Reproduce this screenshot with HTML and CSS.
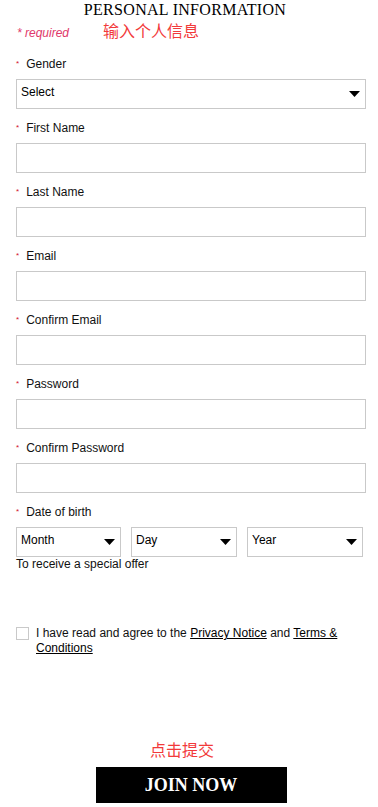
FILE: index.html
```html
<!DOCTYPE html>
<html lang="en">
<head>
<meta charset="utf-8">
<title>Personal Information</title>
<link rel="stylesheet" href="styles.css">
</head>
<body>
<form class="page">
  <h1 class="title">PERSONAL INFORMATION</h1>
  <div class="req-row">
    <span class="req-note">* required</span>
    <span class="cn-note">输入个人信息</span>
  </div>

  <div class="field">
    <label class="label"><span class="star">*</span>Gender</label>
    <div class="select">
      <span>Select</span>
      <svg class="caret" width="11" height="6" viewBox="0 0 11 6"><path d="M0 0H11L5.5 6Z" fill="#000"/></svg>
    </div>
  </div>
  <div class="field">
    <label class="label"><span class="star">*</span>First Name</label>
    <input class="input" type="text">
  </div>
  <div class="field">
    <label class="label"><span class="star">*</span>Last Name</label>
    <input class="input" type="text">
  </div>
  <div class="field">
    <label class="label"><span class="star">*</span>Email</label>
    <input class="input" type="text">
  </div>
  <div class="field">
    <label class="label"><span class="star">*</span>Confirm Email</label>
    <input class="input" type="text">
  </div>
  <div class="field">
    <label class="label"><span class="star">*</span>Password</label>
    <input class="input" type="password">
  </div>
  <div class="field">
    <label class="label"><span class="star">*</span>Confirm Password</label>
    <input class="input" type="password">
  </div>
  <div class="field dob">
    <label class="label"><span class="star">*</span>Date of birth</label>
    <div class="dob-row">
      <div class="select month"><span>Month</span><svg class="caret" width="11" height="6" viewBox="0 0 11 6"><path d="M0 0H11L5.5 6Z" fill="#000"/></svg></div>
      <div class="select day"><span>Day</span><svg class="caret" width="11" height="6" viewBox="0 0 11 6"><path d="M0 0H11L5.5 6Z" fill="#000"/></svg></div>
      <div class="select year"><span>Year</span><svg class="caret" width="11" height="6" viewBox="0 0 11 6"><path d="M0 0H11L5.5 6Z" fill="#000"/></svg></div>
    </div>
    <p class="hint">To receive a special offer</p>
  </div>

  <div class="agree">
    <span class="checkbox"></span>
    <p class="agree-text">I have read and agree to the <a href="#">Privacy Notice</a> and <a href="#">Terms &amp; Conditions</a></p>
  </div>

  <p class="cn-submit">点击提交</p>
  <div class="btn-row">
    <button type="button" class="join">JOIN NOW</button>
  </div>
</form>
</body>
</html>
```

FILE: styles.css
```css
* { box-sizing: border-box; }
html, body { margin: 0; padding: 0; background: #fff; }
body {
  font-family: "Liberation Sans", Arial, "Noto Sans CJK SC", sans-serif;
  font-size: 12px;
  color: #111;
}
.page {
  padding: 0 12px 0 16px;
  display: flex;
  flex-direction: column;
}
.title {
  margin: 0;
  padding-right: 12px;
  font-family: "Liberation Serif", "Times New Roman", serif;
  font-weight: normal;
  font-size: 16px;
  letter-spacing: 0.3px;
  line-height: 20px;
  text-align: center;
  color: #000;
}
.req-row {
  display: flex;
  align-items: baseline;
  height: 20px;
  line-height: 20px;
  margin-bottom: 17px;
}
.req-note {
  font-style: italic;
  color: #e0386a;
  margin-left: 1px;
  width: 86px;
}
.cn-note {
  font-family: "Noto Sans CJK SC", sans-serif;
  font-size: 16px;
  color: #f23a3a;
}
.field {
  display: flex;
  flex-direction: column;
  margin-bottom: 12px;
}
.label {
  display: flex;
  align-items: baseline;
  height: 15px;
  line-height: 15px;
  margin-bottom: 7px;
  color: #111;
}
.star {
  color: #d2132c;
  font-size: 8px;
  line-height: 8px;
  align-self: flex-start;
  margin-top: 3px;
  margin-right: 7px;
}
.input {
  height: 30px;
  width: 100%;
  border: 1px solid #c9c9c9;
  border-radius: 0;
  padding: 0 5px;
  margin: 0;
  font: inherit;
  background: #fff;
}
.select {
  height: 30px;
  border: 1px solid #c9c9c9;
  display: flex;
  align-items: center;
  justify-content: space-between;
  padding: 0 5px 0 4px;
  color: #000;
  background: #fff;
}
.select span { line-height: 15px; margin-top: -3px; }
.caret { display: block; }
.dob { margin-bottom: 0; }
.dob-row {
  display: flex;
  gap: 10px;
}
.month { flex: 0 0 105px; }
.day { flex: 0 0 106px; }
.year { flex: 0 0 116px; }
.hint {
  margin: 0;
  line-height: 15px;
  color: #111;
}
.agree {
  display: flex;
  align-items: flex-start;
  gap: 7px;
  margin-top: 54px;
}
.checkbox {
  flex: 0 0 13px;
  height: 13px;
  margin-top: 1px;
  border: 1px solid #c9c9c9;
  background: #fff;
}
.agree-text {
  margin: 0;
  line-height: 15px;
  color: #111;
  padding-right: 20px;
}
.agree-text a {
  color: #000;
  text-decoration: underline;
}
.cn-submit {
  margin: 83px 0 0;
  padding-right: 18px;
  font-family: "Noto Sans CJK SC", sans-serif;
  font-size: 16px;
  line-height: 20px;
  text-align: center;
  color: #f23a3a;
}
.btn-row {
  display: flex;
  justify-content: center;
  margin-top: 8px;
}
.join {
  width: 191px;
  height: 36px;
  border: 0;
  border-radius: 0;
  background: #000;
  color: #fff;
  font-family: "Liberation Serif", "Times New Roman", serif;
  font-weight: bold;
  font-size: 18px;
  padding: 0;
  cursor: pointer;
}
```
